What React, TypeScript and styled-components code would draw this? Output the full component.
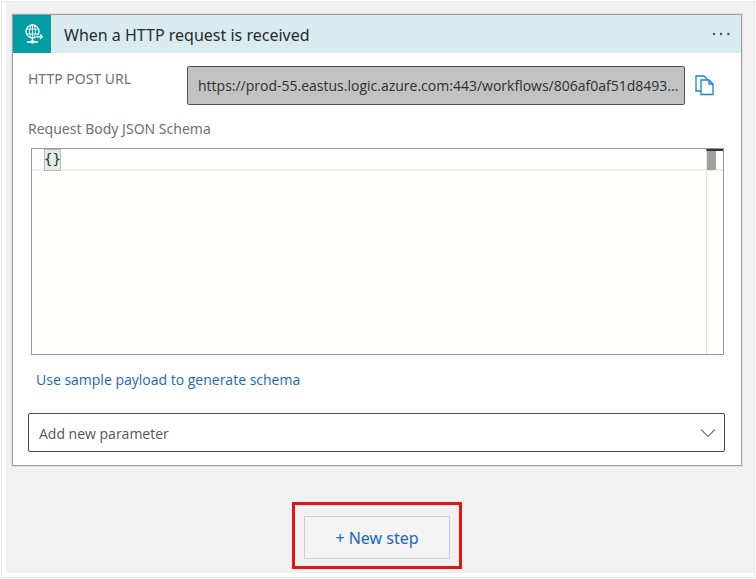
import React, { useState } from "react";
import styled, { createGlobalStyle } from "styled-components";

const GlobalStyle = createGlobalStyle`
  * { box-sizing: border-box; }
  body {
    margin: 0;
    background: #fff;
    font-family: "Noto Sans", "Open Sans", sans-serif;
  }
  button, input, textarea, select { font-family: inherit; }
`;

const Frame = styled.div`
  margin: 1px;
  border: 1px solid #e6e6e6;
  padding: 0 0 4px 4px;
`;

const Canvas = styled.main`
  display: flex;
  flex-direction: column;
  align-items: center;
  padding: 12px 12px 4px 6px;
  background: #f1f1f1;
`;

const Card = styled.section`
  width: 100%;
  border: 1px solid #a19d9e;
  background: #fff;
  box-shadow: 0 0 1px #a19d9e;
`;

const CardHeader = styled.header`
  display: flex;
  align-items: center;
  height: 38px;
  background: #d9ebee;
`;

const IconTile = styled.div`
  display: flex;
  align-items: center;
  justify-content: center;
  width: 38px;
  height: 38px;
  padding-left: 4px;
  background: #009da5;
`;

const Title = styled.h1`
  flex: 1;
  margin: 0;
  padding: 2px 0 0 13px;
  font-size: 16px;
  line-height: 24px;
  font-weight: 400;
  color: #262b2d;
`;

const IconButton = styled.button`
  display: flex;
  padding: 0;
  border: 0;
  background: none;
  cursor: pointer;
`;

const MenuButton = styled(IconButton)`
  margin-right: 11px;
`;

const CardBody = styled.div`
  padding: 13px 16px 13px 15px;
`;

const UrlRow = styled.div`
  display: flex;
  align-items: center;
`;

const Label = styled.label`
  display: block;
  font-size: 14px;
  line-height: 20px;
  color: #707070;
`;

const UrlLabel = styled(Label)`
  align-self: flex-start;
  width: 159px;
  padding-top: 3px;
`;

const UrlInput = styled.input`
  flex: 1;
  min-width: 0;
  height: 39px;
  margin-right: 10px;
  padding: 0 2px 0 10px;
  border: 1px solid #505050;
  border-radius: 2px;
  background: #c2c2c2;
  && { font-family: "Open Sans", sans-serif; }
  font-size: 14px;
  color: #303030;
  text-overflow: ellipsis;
`;

const CopyButton = styled(IconButton)`
  margin-right: 11px;
`;

const SchemaLabel = styled(Label)`
  margin-top: 14px;
`;

const Editor = styled.div`
  position: relative;
  display: flex;
  height: 207px;
  margin: 9px 1px 0 3px;
  border: 1px solid #999;
  background: #fffffd;
`;

const ActiveLine = styled.div`
  position: absolute;
  inset: 0 0 auto;
  height: 22px;
  padding-left: 12px;
  border-bottom: 2px solid #eee;
`;

const BraceMatch = styled.div`
  width: 17px;
  height: 22px;
  border: 1px solid #b9b9b9;
  background: #e1eee1;
`;

const Code = styled.textarea`
  position: relative;
  flex: 1;
  padding: 0 12px;
  border: 0;
  outline: 0;
  resize: none;
  background: transparent;
  && { font-family: "DejaVu Sans Mono", "Liberation Mono", monospace; }
  font-size: 14px;
  line-height: 20px;
  color: #303030;
`;

const ScrollTrack = styled.div`
  position: relative;
  width: 17px;
  border-top: 2px solid #333;
  border-left: 1px solid #e4e4e4;
`;

const ScrollThumb = styled.div`
  width: 9px;
  height: 19px;
  background: #a0a0a0;
`;

const SampleLink = styled.a`
  display: block;
  width: fit-content;
  margin: 15px 0 0 8px;
  font-family: "Open Sans", sans-serif;
  font-size: 14px;
  line-height: 20px;
  color: #1768b8;
  text-decoration: none;
`;

const SelectBox = styled.div`
  position: relative;
  margin-top: 23px;
`;

const Select = styled.select`
  display: block;
  width: 100%;
  height: 39px;
  padding: 2px 36px 0 10px;
  appearance: none;
  border: 1px solid #4a4a4a;
  border-radius: 2px;
  background: #fff;
  && { font-family: "Open Sans", sans-serif; }
  font-size: 14px;
  color: #555;
`;

const Chevron = styled.svg`
  position: absolute;
  top: 15px;
  right: 9px;
  pointer-events: none;
`;

const Highlight = styled.div`
  margin-top: 36px;
  padding: 11px 9px 7px;
  border: 3px solid #ee1111;
`;

const NewStep = styled.button`
  display: block;
  min-width: 146px;
  height: 43px;
  padding: 0 16px;
  border: 1px solid #cfcfcf;
  background: #f3f3f3;
  font-size: 16px;
  color: #1b68b5;
  cursor: pointer;
`;

function GlobeIcon() {
  return (
    <svg width="20" height="20" viewBox="0 0 20 20" fill="none" stroke="#fff" aria-hidden="true">
      <circle cx="8.5" cy="7.5" r="6.5" strokeWidth="1.3" />
      <ellipse cx="8.5" cy="7.5" rx="3" ry="6.5" strokeWidth="0.9" />
      <path d="M2.5 5.2h12M2.5 10h12M8.5 1v13" strokeWidth="0.9" />
      <path d="M8.5 14v3M3 18h11" strokeWidth="1.4" />
      <path d="M8.5 15.5l2.8 2.5-2.8 2-2.8-2z" fill="#fff" stroke="none" />
      <path d="M12 12.8h5.5" stroke="#009da5" strokeWidth="3" />
      <path d="M12 12.8h6M16 10.5l2.3 2.3-2.3 2.3" strokeWidth="1.2" />
    </svg>
  );
}

function MoreIcon() {
  return (
    <svg width="18" height="6" viewBox="0 0 18 6" fill="#454b4d" aria-hidden="true">
      <circle cx="2" cy="3" r="1.2" />
      <circle cx="9" cy="3" r="1.2" />
      <circle cx="16.4" cy="3" r="1.2" />
    </svg>
  );
}

function CopyIcon() {
  return (
    <svg width="19" height="21" viewBox="0 0 19 21" fill="none" stroke="#1683d8" strokeWidth="1.3" aria-hidden="true">
      <path d="M6 16H1V1h8l4 4" />
      <path d="M6 5h8l4 4v10.5H6z" fill="#fff" />
      <path d="M14 5v4h4" />
    </svg>
  );
}

export default function App() {
  const [schema, setSchema] = useState("{}");
  return (
    <>
      <GlobalStyle />
      <Frame>
        <Canvas>
          <Card>
            <CardHeader>
              <IconTile><GlobeIcon /></IconTile>
              <Title>When a HTTP request is received</Title>
              <MenuButton aria-label="More options"><MoreIcon /></MenuButton>
            </CardHeader>
            <CardBody>
              <UrlRow>
                <UrlLabel htmlFor="url">HTTP POST URL</UrlLabel>
                <UrlInput id="url" readOnly value="https://prod-55.eastus.logic.azure.com:443/workflows/806af0af51d8493..." />
                <CopyButton aria-label="Copy URL"><CopyIcon /></CopyButton>
              </UrlRow>
              <SchemaLabel htmlFor="schema">Request Body JSON Schema</SchemaLabel>
              <Editor>
                <ActiveLine><BraceMatch /></ActiveLine>
                <Code id="schema" spellCheck={false} value={schema} onChange={(e) => setSchema(e.target.value)} />
                <ScrollTrack><ScrollThumb /></ScrollTrack>
              </Editor>
              <SampleLink href="#sample">Use sample payload to generate schema</SampleLink>
              <SelectBox>
                <Select aria-label="Add new parameter" defaultValue="">
                  <option value="">Add new parameter</option>
                </Select>
                <Chevron width="16" height="10" viewBox="0 0 16 10" fill="none" stroke="#777" strokeWidth="1.2" aria-hidden="true">
                  <path d="M1 1.5l7 7 7-7" />
                </Chevron>
              </SelectBox>
            </CardBody>
          </Card>
          <Highlight>
            <NewStep>+ New step</NewStep>
          </Highlight>
        </Canvas>
      </Frame>
    </>
  );
}
